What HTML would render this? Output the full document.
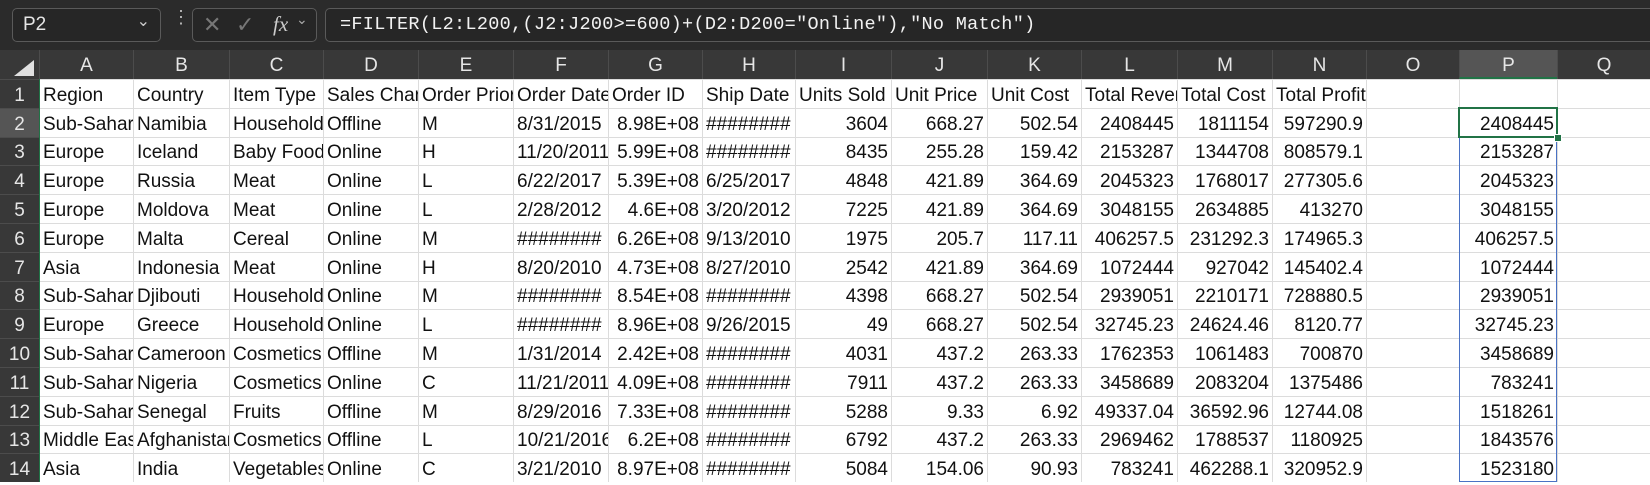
<!DOCTYPE html>
<html><head><meta charset="utf-8"><style>
body{margin:0;width:1650px;height:482px;overflow:hidden;background:#fff;font-family:"Liberation Sans",Arial,sans-serif;position:relative}
#top{position:absolute;left:0;top:0;width:1650px;height:50px;background:#2b2b2b}
.box{position:absolute;top:8px;height:34px;border:1px solid #5a5a5a;border-radius:5px;background:#262626;box-sizing:border-box}
#hdr{position:absolute;left:0;top:50px;width:1650px;height:29px;background:#383838}
.ch{position:absolute;top:50px;height:29px;line-height:31px;text-align:center;color:#e6e6e6;font-size:19px;border-left:1px solid #4c4c4c;box-sizing:border-box}
.rh{position:absolute;left:0;width:39px;text-align:center;color:#e6e6e6;font-size:19px;background:#383838;box-sizing:border-box;border-top:1px solid #4c4c4c}
.c{position:absolute;height:29px;line-height:31px;font-size:19px;color:#111;white-space:nowrap;overflow:hidden;box-sizing:border-box;border-left:1px solid #dcdcdc;border-top:1px solid #dcdcdc;padding:0 3px}
.r{text-align:right}
</style></head><body>
<div id="top"></div>
<div class="box" style="left:12px;width:149px"><span style="position:absolute;left:10px;top:5px;color:#e6e6e6;font-size:19px">P2</span><span style="position:absolute;right:10px;top:2px;color:#ccc;font-size:16px">&#8964;</span></div>
<div style="position:absolute;left:172px;top:13px;color:#bbb;font-size:18px;line-height:8px">&#8942;</div>
<div class="box" style="left:192px;width:125px"><span style="position:absolute;left:10px;top:3px;color:#777;font-size:22px">&#10005;</span><span style="position:absolute;left:43px;top:3px;color:#777;font-size:22px">&#10003;</span><span style="position:absolute;left:80px;top:3px;color:#ccc;font-size:21px;font-style:italic;font-family:'Liberation Serif',serif">fx</span><span style="position:absolute;left:103px;top:2px;color:#aaa;font-size:14px">&#8964;</span></div>
<div class="box" style="left:325px;width:1330px"><span style="position:absolute;left:14px;top:5px;color:#f2f2f2;font-size:18.5px;font-family:'Liberation Mono',monospace;letter-spacing:0.3px">=FILTER(L2:L200,(J2:J200&gt;=600)+(D2:D200="Online"),"No Match")</span></div>
<div id="hdr"></div>
<svg style="position:absolute;left:10px;top:58px" width="26" height="20"><polygon points="24,2 24,18 4,18" fill="#e0e0e0"/></svg>
<div id="g"></div>
<script>
var e=[39,133,229,323,418,513,608,702,795,891,987,1081,1177,1272,1366,1459,1557,1650];
var L="ABCDEFGHIJKLMNOPQ";
var h='';
for(var i=0;i<17;i++){var bg=i==15?'background:#555;border-bottom:2px solid #217346;':'';h+='<div class="ch" style="left:'+e[i]+'px;width:'+(e[i+1]-e[i])+'px;'+bg+'">'+L[i]+'</div>';}
var D=[
["Region","Country","Item Type","Sales Channel","Order Priority","Order Date","Order ID","Ship Date","Units Sold","Unit Price","Unit Cost","Total Revenue","Total Cost","Total Profit","",""],
["Sub-Saharan","Namibia","Household","Offline","M","8/31/2015","8.98E+08","########","3604","668.27","502.54","2408445","1811154","597290.9","","2408445"],
["Europe","Iceland","Baby Food","Online","H","11/20/2011","5.99E+08","########","8435","255.28","159.42","2153287","1344708","808579.1","","2153287"],
["Europe","Russia","Meat","Online","L","6/22/2017","5.39E+08","6/25/2017","4848","421.89","364.69","2045323","1768017","277305.6","","2045323"],
["Europe","Moldova","Meat","Online","L","2/28/2012","4.6E+08","3/20/2012","7225","421.89","364.69","3048155","2634885","413270","","3048155"],
["Europe","Malta","Cereal","Online","M","########","6.26E+08","9/13/2010","1975","205.7","117.11","406257.5","231292.3","174965.3","","406257.5"],
["Asia","Indonesia","Meat","Online","H","8/20/2010","4.73E+08","8/27/2010","2542","421.89","364.69","1072444","927042","145402.4","","1072444"],
["Sub-Saharan","Djibouti","Household","Online","M","########","8.54E+08","########","4398","668.27","502.54","2939051","2210171","728880.5","","2939051"],
["Europe","Greece","Household","Online","L","########","8.96E+08","9/26/2015","49","668.27","502.54","32745.23","24624.46","8120.77","","32745.23"],
["Sub-Saharan","Cameroon","Cosmetics","Offline","M","1/31/2014","2.42E+08","########","4031","437.2","263.33","1762353","1061483","700870","","3458689"],
["Sub-Saharan","Nigeria","Cosmetics","Online","C","11/21/2011","4.09E+08","########","7911","437.2","263.33","3458689","2083204","1375486","","783241"],
["Sub-Saharan","Senegal","Fruits","Offline","M","8/29/2016","7.33E+08","########","5288","9.33","6.92","49337.04","36592.96","12744.08","","1518261"],
["Middle East","Afghanistan","Cosmetics","Offline","L","10/21/2016","6.2E+08","########","6792","437.2","263.33","2969462","1788537","1180925","","1843576"],
["Asia","India","Vegetables","Online","C","3/21/2010","8.97E+08","########","5084","154.06","90.93","783241","462288.1","320952.9","","1523180"]];
var RH=28.8,T=79;
for(var r=0;r<14;r++){var y=Math.round(T+r*RH),y2=Math.round(T+(r+1)*RH),hh=y2-y;
h+='<div class="rh" style="top:'+y+'px;height:'+hh+'px;line-height:'+(hh+2)+'px;'+(r==1?'background:#555;':'')+'">'+(r+1)+'</div>';
for(var i=0;i<17;i++){var v=i<16?D[r][i]:'';var num=r>0&&/^[0-9.E+#\/]+$/.test(v)&&!/\//.test(v)&&v.indexOf('#')<0;
h+='<div class="c'+(num?' r':'')+'" style="left:'+e[i]+'px;top:'+y+'px;width:'+(e[i+1]-e[i])+'px;height:'+hh+'px;line-height:'+(hh+2)+'px">'+v+'</div>';}}
h+='<div style="position:absolute;left:39px;top:79px;width:1px;height:403px;background:#217346"></div>';
var p2t=Math.round(T+RH),p3t=Math.round(T+2*RH);
h+='<div style="position:absolute;left:1459px;top:'+(p3t)+'px;width:98px;height:'+(482-p3t)+'px;border:1px solid #4a72c4;border-top:none;box-sizing:border-box"></div>';
h+='<div style="position:absolute;left:1458px;top:'+(p2t-1)+'px;width:100px;height:'+(p3t-p2t+2)+'px;border:2px solid #217346;box-sizing:border-box"></div>';
h+='<div style="position:absolute;left:1554px;top:'+(p3t-3)+'px;width:6px;height:6px;background:#217346;border:1px solid #fff"></div>';
document.getElementById('g').innerHTML=h;
</script>
</body></html>
